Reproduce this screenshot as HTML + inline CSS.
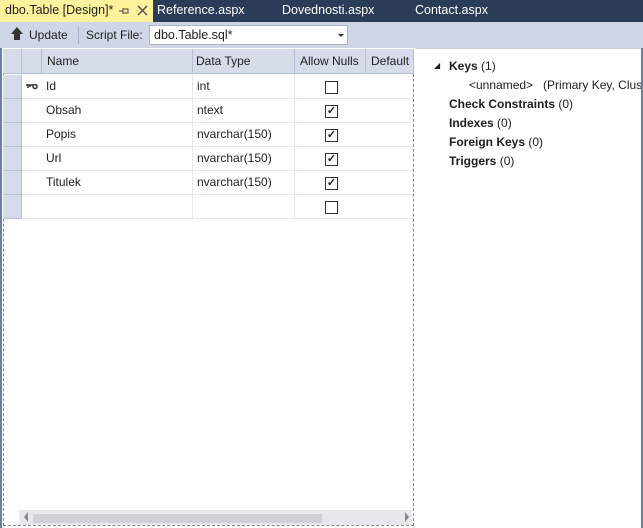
<!DOCTYPE html>
<html><head><style>
*{margin:0;padding:0;box-sizing:border-box}
body{width:643px;height:528px;overflow:hidden;background:#fff;font-family:"Liberation Sans",sans-serif;font-size:12px;color:#1e1e1e;position:relative}
.a{position:absolute}
.tabs{left:0;top:0;width:643px;height:22px;background:#2b3c59}
.tab{top:3px;color:#fff;font-size:12.5px}
.tb{left:0;top:22px;width:643px;height:26px;background:#cfd6e5}
.grid{left:3px;top:49px;width:411px;height:477px;border:1px dashed #888;border-top:none;background:#fff}
.h{top:49px;height:25px;background:#d6dbe9;border-right:1px solid #b7bfd2;border-bottom:1px solid #b7bfd2;line-height:24px;padding-left:6px}
.row{left:3px;width:410px;height:24px;border-bottom:1px solid #e6e9f0}
.cell{top:0;height:24px;line-height:23px;border-right:1px solid #e6e9f0;padding-left:4px}
.rh{left:0;top:0;width:19px;height:24px;background:#d6dbe9;border-right:1px solid #b7bfd2;border-bottom:1px solid #b7bfd2}
.cb{position:absolute;left:322px;top:6px;width:13px;height:13px;border:1px solid #333;background:#fff;font-size:11px;line-height:11px;text-align:center;font-weight:bold}
.rp{left:416px;top:48px;width:227px;height:480px;background:#fff;border-top:1px solid #ccc}
.rp div{position:absolute;font-size:12px}
b{font-weight:bold}
</style></head><body>
<div class="a tabs"></div>
<div class="a" style="left:0;top:0;width:153px;height:22px;background:#fff29d"></div>
<div class="a tab" style="left:5px;color:#1e1e1e">dbo.Table [Design]*</div>
<svg class="a" style="left:118px;top:6px" width="12" height="10"><path d="M1 5H5M5 2V8M5 3H10V7H5" stroke="#444" fill="none"/></svg>
<svg class="a" style="left:137px;top:5px" width="11" height="11"><path d="M1 1L10 10M10 1L1 10" stroke="#555" stroke-width="1.5"/></svg>
<div class="a tab" style="left:157px">Reference.aspx</div>
<div class="a tab" style="left:282px">Dovednosti.aspx</div>
<div class="a tab" style="left:415px">Contact.aspx</div>
<div class="a tb"></div>
<div class="a" style="left:11px;top:27px;width:0;height:0;border-left:6px solid transparent;border-right:6px solid transparent;border-bottom:7px solid #333"></div>
<div class="a" style="left:14px;top:34px;width:6px;height:6px;background:#333"></div>
<div class="a" style="left:29px;top:28px">Update</div>
<div class="a" style="left:78px;top:26px;width:1px;height:18px;background:#a9b2c6"></div>
<div class="a" style="left:86px;top:28px">Script File:</div>
<div class="a" style="left:149px;top:25px;width:199px;height:20px;background:#fff;border:1px solid #a9b2c6;padding:2px 4px;font-size:12.5px">dbo.Table.sql*</div>
<div class="a" style="left:338px;top:34px;border-left:3px solid transparent;border-right:3px solid transparent;border-top:3px solid #333"></div>
<div class="a" style="left:0;top:48px;width:2px;height:480px;background:#6d7ea6"></div>
<div class="a grid"></div>
<div class="a h" style="left:3px;width:19px"></div>
<div class="a h" style="left:22px;width:20px"></div>
<div class="a h" style="left:42px;width:151px;padding-left:5px">Name</div>
<div class="a h" style="left:193px;width:102px;padding-left:3px">Data Type</div>
<div class="a h" style="left:295px;width:71px;padding-left:5px">Allow Nulls</div>
<div class="a h" style="left:366px;width:48px;padding-left:5px">Default</div>

<div class="a row" style="top:75px"><div class="rh"></div><svg class="a" style="left:23px;top:9px" width="12" height="6"><path d="M0 1H7M2 1V4M4 1V3" stroke="#333" stroke-width="1.5" fill="none"/><circle cx="9" cy="2.5" r="2" fill="none" stroke="#333" stroke-width="1.5"/></svg><div class="a cell" style="left:39px;width:151px">Id</div><div class="a cell" style="left:190px;width:102px">int</div><div class="cb"></div></div>
<div class="a row" style="top:99px"><div class="rh"></div><div class="a cell" style="left:39px;width:151px">Obsah</div><div class="a cell" style="left:190px;width:102px">ntext</div><div class="cb">✓</div></div>
<div class="a row" style="top:123px"><div class="rh"></div><div class="a cell" style="left:39px;width:151px">Popis</div><div class="a cell" style="left:190px;width:102px">nvarchar(150)</div><div class="cb">✓</div></div>
<div class="a row" style="top:147px"><div class="rh"></div><div class="a cell" style="left:39px;width:151px">Url</div><div class="a cell" style="left:190px;width:102px">nvarchar(150)</div><div class="cb">✓</div></div>
<div class="a row" style="top:171px"><div class="rh"></div><div class="a cell" style="left:39px;width:151px">Titulek</div><div class="a cell" style="left:190px;width:102px">nvarchar(150)</div><div class="cb">✓</div></div>
<div class="a row" style="top:195px"><div class="rh"></div><div class="a cell" style="left:39px;width:151px"></div><div class="a cell" style="left:190px;width:102px"></div><div class="cb"></div></div>

<div class="a" style="left:19px;top:510px;width:393px;height:15px;background:#e8e8ec"></div>
<div class="a" style="left:33px;top:514px;width:289px;height:9px;background:#d0d0d6"></div>
<div class="a" style="left:24px;top:512px;border-top:5px solid transparent;border-bottom:5px solid transparent;border-right:4px solid #888"></div>
<div class="a" style="left:405px;top:512px;border-top:5px solid transparent;border-bottom:5px solid transparent;border-left:4px solid #888"></div>

<div class="a" style="left:419px;top:232px;width:2px;height:50px;border-left:1px solid #aaa;border-right:1px solid #aaa"></div>

<div class="a rp">
<div style="left:18px;top:12px;font-size:8px">◢</div>
<div style="left:33px;top:10px"><b>Keys</b> (1)</div>
<div style="left:53px;top:29px">&lt;unnamed&gt;&nbsp;&nbsp;&nbsp;(Primary Key, Clus</div>
<div style="left:33px;top:48px"><b>Check Constraints</b> (0)</div>
<div style="left:33px;top:67px"><b>Indexes</b> (0)</div>
<div style="left:33px;top:86px"><b>Foreign Keys</b> (0)</div>
<div style="left:33px;top:105px"><b>Triggers</b> (0)</div>
</div>
<div class="a" style="left:641px;top:48px;width:2px;height:480px;background:#6d7ea6"></div>
</body></html>
